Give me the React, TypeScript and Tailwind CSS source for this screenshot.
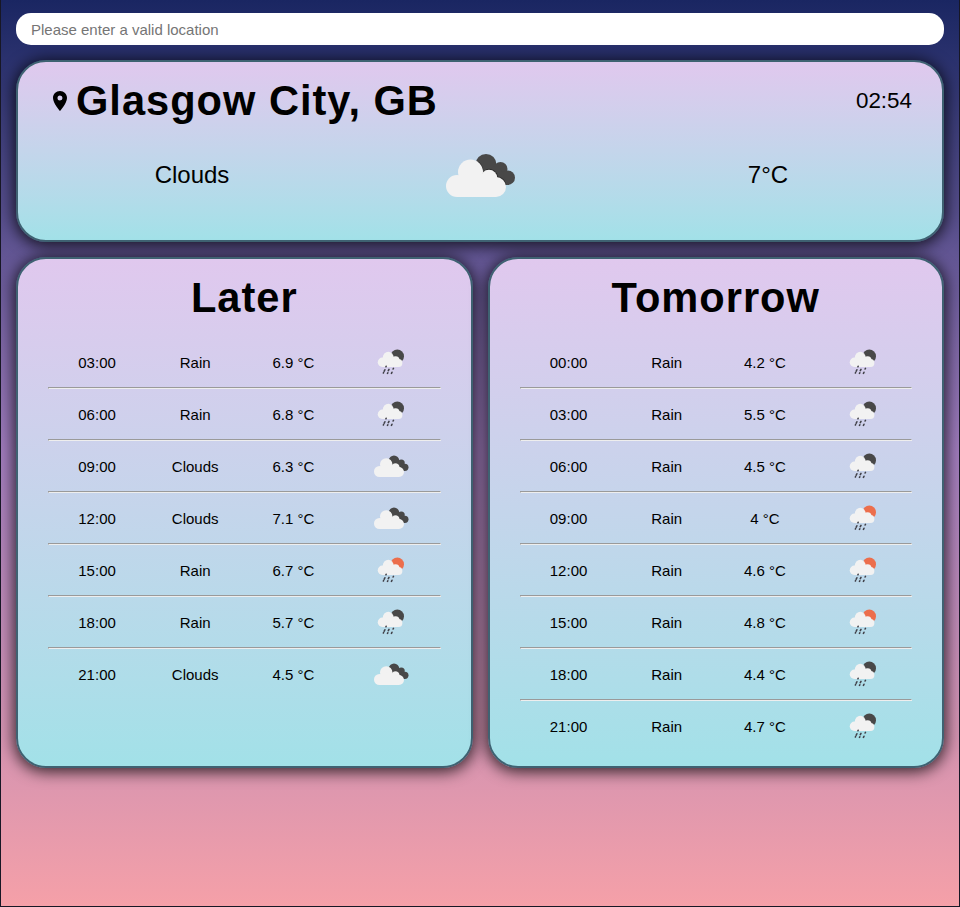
type Kind = "cloud" | "rain" | "sunrain";

function WeatherIcon({ kind, className }: { kind: Kind; className: string }) {
  if (kind === "cloud") {
    return (
      <svg viewBox="0 0 100 100" className={className}>
        <g fill="#484848">
          <circle cx="56" cy="39.500" r="10.500" />
          <circle cx="70.500" cy="44" r="7" />
          <circle cx="77.700" cy="52.700" r="7.300" />
          <path d="M50 42h20l8 18H60z" />
        </g>
        <path
          fill="none"
          stroke="#2e2e2e"
          strokeWidth="1.600"
          d="M47 36.500a12.500 12.500 0 0 1 5.500 8.500M56 45.200a8.300 8.300 0 0 1 11.300 7.300M68 52.200a10 10 0 0 1 7.500 7"
        />
        <g fill="#f2f2f2">
          <circle cx="27" cy="61" r="11" />
          <circle cx="40.500" cy="47" r="12.500" />
          <circle cx="59" cy="53" r="8.300" />
          <circle cx="66" cy="62" r="10" />
          <path d="M27 52l14-5 18 5 7 8v12H27z" />
        </g>
      </svg>
    );
  }
  return (
    <svg viewBox="0 -1.500 100 100" className={className}>
      <circle cx="62.600" cy="36.800" r="13.400" fill={kind === "rain" ? "#484848" : "#ec6e4c"} />
      <g fill="#f2f2f2">
        <circle cx="32.800" cy="49" r="9.300" />
        <circle cx="44.500" cy="39" r="10.800" />
        <circle cx="59" cy="45" r="8" />
        <circle cx="65" cy="50.500" r="7.800" />
        <path d="M32.800 42l12-3 15 4 5.200 8v7.300H32.800z" />
      </g>
      <g stroke="#404048" strokeWidth="3.200" strokeLinecap="round">
        <path d="M40.300 57l-.4 1M37.800 64l-1.300 2.600M46 63.300l-1.400 2.600M54.900 61.300l-.6 1.200M35.200 69.500l-.4 1M43.600 70l-.6 1.200M52 69l-1.100 2.200" />
      </g>
    </svg>
  );
}

type Row = [string, string, string, Kind];

const later: Row[] = [
  ["03:00", "Rain", "6.9", "rain"],
  ["06:00", "Rain", "6.8", "rain"],
  ["09:00", "Clouds", "6.3", "cloud"],
  ["12:00", "Clouds", "7.1", "cloud"],
  ["15:00", "Rain", "6.7", "sunrain"],
  ["18:00", "Rain", "5.7", "rain"],
  ["21:00", "Clouds", "4.5", "cloud"],
];

const tomorrow: Row[] = [
  ["00:00", "Rain", "4.2", "rain"],
  ["03:00", "Rain", "5.5", "rain"],
  ["06:00", "Rain", "4.5", "rain"],
  ["09:00", "Rain", "4", "sunrain"],
  ["12:00", "Rain", "4.6", "sunrain"],
  ["15:00", "Rain", "4.8", "sunrain"],
  ["18:00", "Rain", "4.4", "rain"],
  ["21:00", "Rain", "4.7", "rain"],
];

const card =
  "rounded-[30px] border-2 border-[#3f6272] bg-linear-to-b from-[#e0c8ee] to-[#a2e1e8] shadow-[0_2px_15px_2px_rgba(0,0,0,0.75)]";

function Forecast({ title, rows }: { title: string; rows: Row[] }) {
  return (
    <section className={`${card} h-[511px] flex-1 px-[30px] pt-[15px]`}>
      <h2 className="text-center text-[41.6px] leading-[48px] font-bold tracking-[1px]">{title}</h2>
      <div className="mt-[15px]">
        {rows.map(([time, name, temp, kind], i) => (
          <div key={time}>
            {i > 0 && (
              <hr className="border border-t-[#9a9a9a] border-r-[#eeeeee] border-b-[#eeeeee] border-l-[#9a9a9a]" />
            )}
            <div className="grid h-[50px] grid-cols-4 items-center text-center text-[15px]">
              <span className="pt-0.5">{time}</span>
              <span className="pt-0.5">{name}</span>
              <span className="pt-0.5">{temp} °C</span>
              <WeatherIcon kind={kind} className="mx-auto size-[50px]" />
            </div>
          </div>
        ))}
      </div>
    </section>
  );
}

export default function App() {
  return (
    <main className="h-[907px] overflow-hidden border border-t-0 border-[#171725] bg-linear-to-b from-[#1a2662] via-[#9f7bbb] to-[#f5a0a8] px-[15px] pt-[13px] font-['Liberation_Sans',Arial,sans-serif] text-black">
      <input
        className="block h-8 w-full rounded-[15px] bg-white px-[15px] text-[15px] outline-none placeholder:text-[#757575]"
        placeholder="Please enter a valid location"
      />
      <section className={`${card} mt-[15px] h-[182px] px-[30px] pt-[15px]`}>
        <div className="flex h-12 items-center justify-between">
          <div className="flex items-center">
            <svg viewBox="0 0 24 24" className="mr-1 size-6">
              <path d="M12 2C8.130 2 5 5.130 5 9c0 5.250 7 13 7 13s7-7.750 7-13c0-3.870-3.130-7-7-7zm0 9.500a2.500 2.500 0 1 1 0-5 2.500 2.500 0 0 1 0 5z" />
            </svg>
            <h1 className="text-[41.6px] leading-[48px] font-bold tracking-[1px]">Glasgow City, GB</h1>
          </div>
          <time className="text-[22.4px]">02:54</time>
        </div>
        <div className="grid h-[100px] grid-cols-3 items-center text-center text-2xl">
          <span>Clouds</span>
          <WeatherIcon kind="cloud" className="mx-auto size-[100px]" />
          <span>7°C</span>
        </div>
      </section>
      <div className="mt-[15px] flex gap-[15px]">
        <Forecast title="Later" rows={later} />
        <Forecast title="Tomorrow" rows={tomorrow} />
      </div>
    </main>
  );
}
